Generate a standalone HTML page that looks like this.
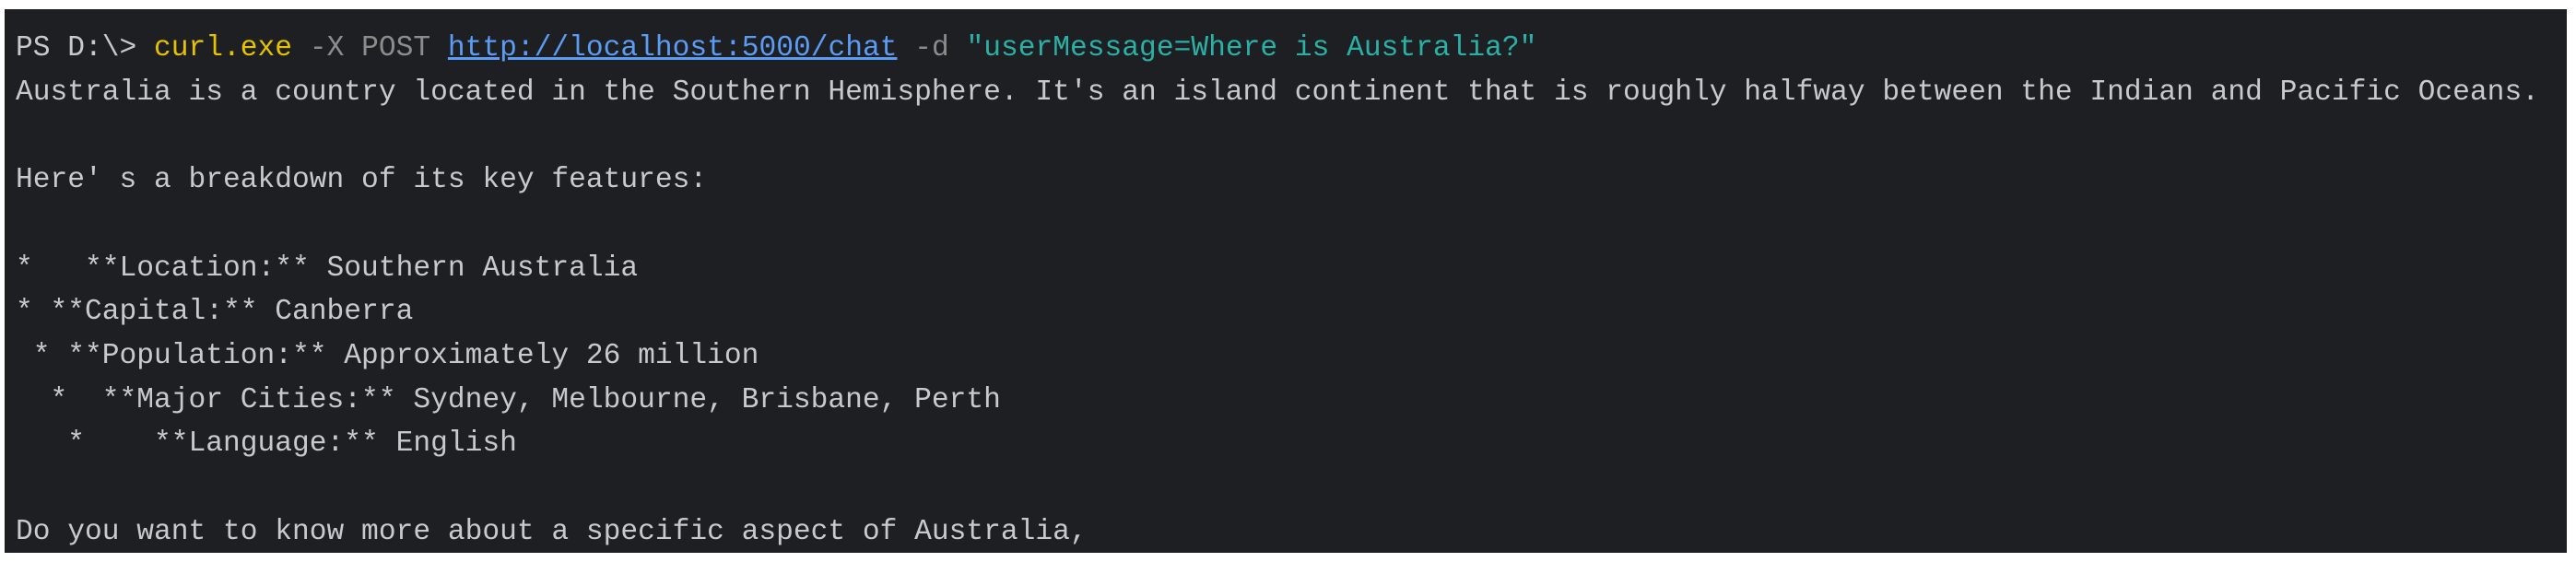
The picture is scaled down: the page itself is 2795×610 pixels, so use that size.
<!DOCTYPE html>
<html><head><meta charset="utf-8"><style>
html,body{margin:0;padding:0;background:#fff;width:2795px;height:610px;overflow:hidden}
.box{position:absolute;left:5px;top:10px;width:2780px;height:590px;background:#1e1f22}
pre{position:absolute;left:17px;top:29px;margin:0;font-family:"Liberation Mono",monospace;font-size:31.25px;line-height:47.7px;color:#c6cacf;white-space:pre}
.y{color:#e5c100}.g{color:#8c8c8c}.l{color:#5b9cf5;text-decoration:underline}.c{color:#2bb0a6}
</style></head><body><div class="box"></div><pre>PS D:\&gt; <span class="y">curl.exe</span> <span class="g">-X</span> <span class="g">POST</span> <span class="l">http://localhost:5000/chat</span> <span class="g">-d</span> <span class="c">"userMessage=Where is Australia?"</span>
Australia is a country located in the Southern Hemisphere. It's an island continent that is roughly halfway between the Indian and Pacific Oceans.

Here' s a breakdown of its key features:

*   **Location:** Southern Australia
* **Capital:** Canberra
 * **Population:** Approximately 26 million
  *  **Major Cities:** Sydney, Melbourne, Brisbane, Perth
   *    **Language:** English

Do you want to know more about a specific aspect of Australia,</pre></body></html>
